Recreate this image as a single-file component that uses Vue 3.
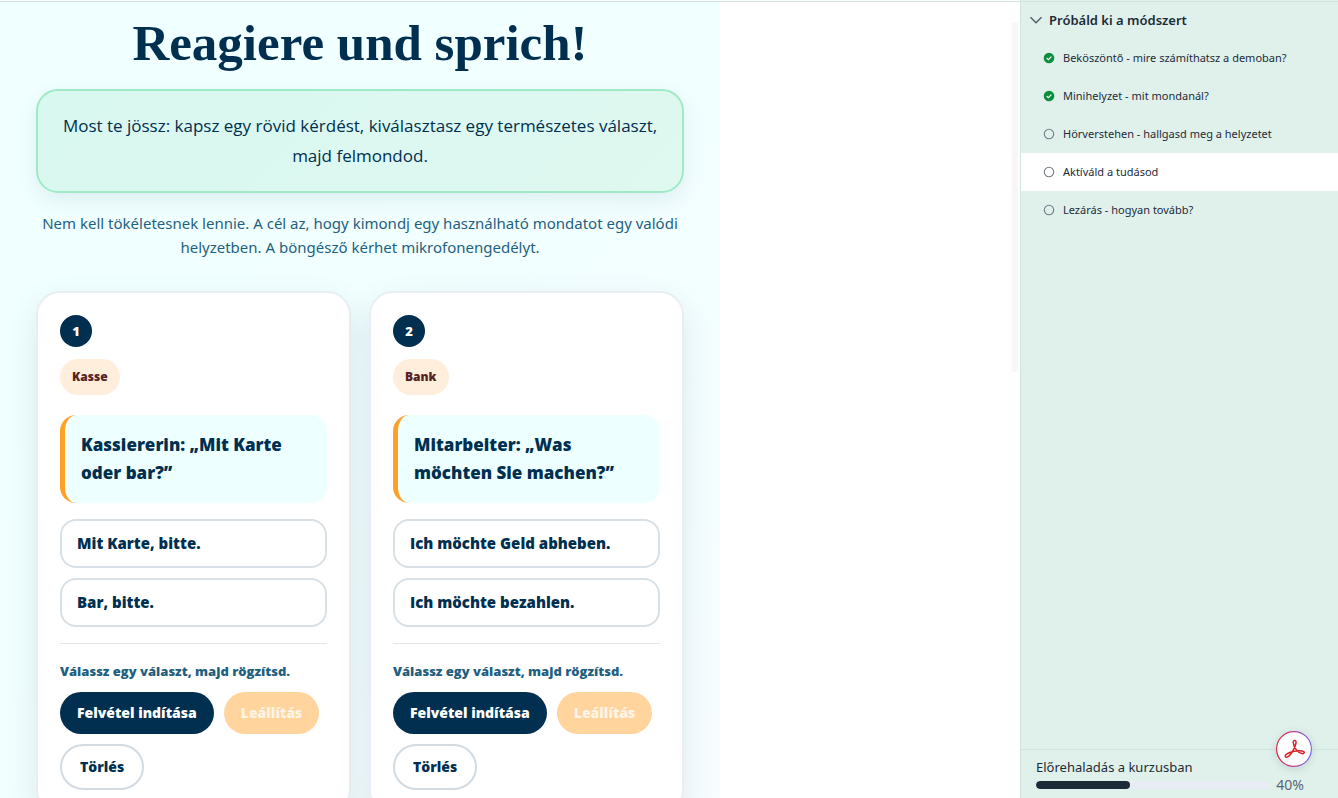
<script setup>
import { ref } from 'vue'

const cards = ref([
  {
    id: 1,
    tag: 'Kasse',
    prompt: 'Kassiererin: „Mit Karte oder bar?”',
    answers: ['Mit Karte, bitte.', 'Bar, bitte.'],
  },
  {
    id: 2,
    tag: 'Bank',
    prompt: 'Mitarbeiter: „Was möchten Sie machen?”',
    answers: ['Ich möchte Geld abheben.', 'Ich möchte bezahlen.'],
  },
])

const lessons = [
  { title: 'Beköszöntő - mire számíthatsz a demoban?', done: true },
  { title: 'Minihelyzet - mit mondanál?', done: true },
  { title: 'Hörverstehen - hallgasd meg a helyzetet', done: false },
  { title: 'Aktíváld a tudásod', done: false, active: true },
  { title: 'Lezárás - hogyan tovább?', done: false },
]

const open = ref(true)
const progress = 40
</script>

<template>
  <div class="page">
    <main class="content">
      <section class="lesson">
        <h1>Reagiere und sprich!</h1>
        <p class="callout">
          Most te jössz: kapsz egy rövid kérdést, kiválasztasz egy természetes választ, majd felmondod.
        </p>
        <p class="note">
          Nem kell tökéletesnek lennie. A cél az, hogy kimondj egy használható mondatot egy valódi
          helyzetben. A böngésző kérhet mikrofonengedélyt.
        </p>
        <div class="cards">
          <article v-for="card in cards" :key="card.id" class="card">
            <span class="number">{{ card.id }}</span>
            <span class="tag">{{ card.tag }}</span>
            <p class="prompt">{{ card.prompt }}</p>
            <div class="answers">
              <button v-for="a in card.answers" :key="a" type="button" class="answer">{{ a }}</button>
            </div>
            <div class="recorder">
              <p class="status">Válassz egy választ, majd rögzítsd.</p>
              <div class="actions">
                <button type="button" class="btn start">Felvétel indítása</button>
                <button type="button" class="btn stop" disabled>Leállítás</button>
                <button type="button" class="btn clear">Törlés</button>
              </div>
            </div>
          </article>
        </div>
      </section>
      <div class="scroll-track"></div>
    </main>

    <aside class="sidebar">
      <button type="button" class="section" :aria-expanded="open" @click="open = !open">
        <svg width="14" height="14" viewBox="0 0 14 14" fill="none" stroke="#4a5b68" stroke-width="1.3">
          <path d="M1.5 4.2 7 9.8l5.5-5.600" />
        </svg>
        <span>Próbáld ki a módszert</span>
      </button>
      <nav v-show="open" class="items">
        <a
          v-for="l in lessons"
          :key="l.title"
          href="#"
          class="item"
          :class="{ active: l.active }"
        >
          <svg v-if="l.done" width="12" height="12" viewBox="0 0 12 12">
            <circle cx="6" cy="6" r="5.300" fill="#0a8f3c" />
            <path d="M3.700 6.100 5.400 7.700 8.400 4.600" fill="none" stroke="#fff" stroke-width="1.200" />
          </svg>
          <svg v-else width="12" height="12" viewBox="0 0 12 12">
            <circle cx="6" cy="6" r="4.700" fill="none" stroke="#6f7f8a" stroke-width="1.100" />
          </svg>
          <span>{{ l.title }}</span>
        </a>
      </nav>
      <footer class="progress">
        <button type="button" class="pdf" aria-label="PDF">
          <svg viewBox="0 0 36 36" width="36" height="36" fill="none">
            <defs>
              <linearGradient id="ring" x1="0" y1="0" x2="1" y2="0">
                <stop offset="0" stop-color="#e0263c" />
                <stop offset="0.55" stop-color="#b9459c" />
                <stop offset="1" stop-color="#7a6be0" />
              </linearGradient>
            </defs>
            <circle cx="18" cy="18" r="17.400" fill="#fff" stroke="url(#ring)" stroke-width="1.200" />
            <path
              d="M17.200 11.500C17 8.600 20.600 8.600 20 12C19.300 16 15.500 23 12.500 25.300C9.500 27.500 8 25 10.500 23.200C14 20.700 22 19 26.200 20C29.500 20.800 28.300 23 26 22.600C22 22 17.800 17 17.200 11.500Z"
              stroke="#dc1f26"
              stroke-width="1.500"
              stroke-linejoin="round"
            />
          </svg>
        </button>
        <span id="progress-label" class="label">Előrehaladás a kurzusban</span>
        <div class="row">
          <div class="bar" role="progressbar" aria-labelledby="progress-label" :aria-valuenow="progress">
            <div class="fill" :style="{ width: progress + '%' }"></div>
          </div>
          <span class="percent">{{ progress }}%</span>
        </div>
      </footer>
    </aside>
  </div>
</template>

<style>
body {
  margin: 0;
  background: #fff;
}
</style>

<style scoped>
.page {
  display: grid;
  grid-template-columns: minmax(0, 1fr) 318px;
  height: 100vh;
  overflow: hidden;
  font-family: "Noto Sans", "Open Sans", sans-serif;
  color: #002f50;
}
p,
h1 {
  margin: 0;
}
button {
  font-family: inherit;
  color: inherit;
  cursor: pointer;
}
.content {
  display: flex;
  justify-content: space-between;
  margin-top: 1px;
  border-top: 1px solid #cfe6de;
  overflow: hidden;
}
.lesson {
  box-sizing: border-box;
  flex: 0 1 720px;
  height: max-content;
  padding: 12px 36px 36px;
  background: linear-gradient(135deg, #f0ffff 0%, #f1ffff 45%, #f8fdff 100%);
}
h1 {
  margin-bottom: 17px;
  font-family: "Liberation Serif", serif;
  font-size: 51px;
  line-height: 58px;
  font-weight: 700;
  text-align: center;
}
.callout {
  padding: 20px 22px;
  border: 2px solid #9eeac7;
  border-radius: 22px;
  background: linear-gradient(135deg, #d9f8f0, #dff8f0);
  box-shadow: 0 8px 22px rgba(0, 47, 80, 0.08);
  font-family: "Open Sans", "Noto Sans", sans-serif;
  font-size: 17px;
  line-height: 30px;
  text-align: center;
}
.note {
  margin-top: 18px;
  font-size: 15px;
  line-height: 24px;
  color: #1f5f80;
  text-align: center;
}
.cards {
  display: grid;
  grid-template-columns: repeat(2, minmax(0, 1fr));
  gap: 18px;
  margin-top: 32px;
  font-family: "Open Sans", "Noto Sans", sans-serif;
}
.card {
  display: flex;
  flex-direction: column;
  align-items: flex-start;
  padding: 22px;
  border: 2px solid #e8eef1;
  border-radius: 24px;
  background: #fff;
  box-shadow: 0 12px 32px rgba(0, 47, 80, 0.1);
}
.number {
  display: grid;
  place-items: center;
  width: 32px;
  height: 32px;
  border-radius: 50%;
  background: #002f50;
  color: #fff;
  font-size: 13px;
  font-weight: 800;
}
.tag {
  margin-top: 12px;
  padding: 0 12px;
  border-radius: 18px;
  background: #ffeedb;
  color: #552222;
  font-size: 12px;
  line-height: 36px;
  font-weight: 800;
}
.prompt {
  box-sizing: border-box;
  width: 100%;
  margin-top: 20px;
  padding: 16px;
  border-left: 5px solid #ffa126;
  border-radius: 16px;
  background: #edffff;
  font-size: 17px;
  line-height: 28px;
  font-weight: 800;
}
.answers {
  display: grid;
  gap: 10px;
  width: 100%;
  margin-top: 16px;
}
.answer {
  padding: 0 15px;
  border: 2px solid #d8e0e6;
  border-radius: 16px;
  background: #fff;
  font-size: 15px;
  line-height: 45px;
  font-weight: 800;
  text-align: left;
}
.recorder {
  width: 100%;
  margin-top: 16px;
  padding-top: 16px;
  border-top: 1px solid #e0e6ea;
}
.status {
  font-size: 13px;
  line-height: 22px;
  font-weight: 800;
  color: #1f5f80;
}
.actions {
  display: flex;
  flex-wrap: wrap;
  align-items: flex-start;
  gap: 10px;
  margin-top: 10px;
}
.btn {
  padding: 0 17px;
  border: 0;
  border-radius: 23px;
  font-size: 14px;
  line-height: 42px;
  font-weight: 800;
}
.start {
  background: #002f50;
  color: #fff;
}
.stop {
  background: #ffd49d;
  color: #fff4e6;
}
.clear {
  padding: 0 18px;
  border: 2px solid #d2dbe2;
  background: #fff;
}
.scroll-track {
  width: 6px;
  height: 350px;
  margin: 20px 2px 0 0;
  border-radius: 3px;
  background: #f7f7f7;
}
.sidebar {
  display: flex;
  flex-direction: column;
  border-left: 1px solid #cde5dc;
  background: #e0f1eb;
  color: #1d2b39;
}
.section {
  display: flex;
  align-items: center;
  gap: 6px;
  margin-top: 1px;
  padding: 0 8px;
  border: 0;
  border-top: 1px solid #cfe6de;
  background: none;
  font-size: 13px;
  line-height: 36px;
  font-weight: 600;
}
.items {
  display: flex;
  flex-direction: column;
  margin-top: 1px;
}
.item {
  display: flex;
  align-items: center;
  gap: 8px;
  padding: 0 22px;
  font-size: 11px;
  line-height: 38px;
  color: inherit;
  text-decoration: none;
  white-space: nowrap;
}
.item.active {
  background: #fff;
}
.progress {
  position: relative;
  margin-top: auto;
  padding: 7px 34px 5px 15px;
  border-top: 1px solid #cfe6de;
}
.label {
  display: block;
  font-size: 13px;
  line-height: 20px;
}
.row {
  display: flex;
  align-items: center;
  gap: 5px;
}
.bar {
  flex: 1;
  height: 8px;
  border-radius: 4px;
  background: #e8edf5;
  overflow: hidden;
}
.fill {
  height: 100%;
  border-radius: 4px;
  background: #1d2b39;
}
.percent {
  font-size: 14px;
  line-height: 16px;
  color: #5c6670;
}
.pdf {
  position: absolute;
  top: -19px;
  right: 26px;
  display: flex;
  padding: 0;
  border: 0;
  border-radius: 50%;
  background: none;
  box-shadow: 0 2px 8px rgba(0, 47, 80, 0.15);
}
</style>
